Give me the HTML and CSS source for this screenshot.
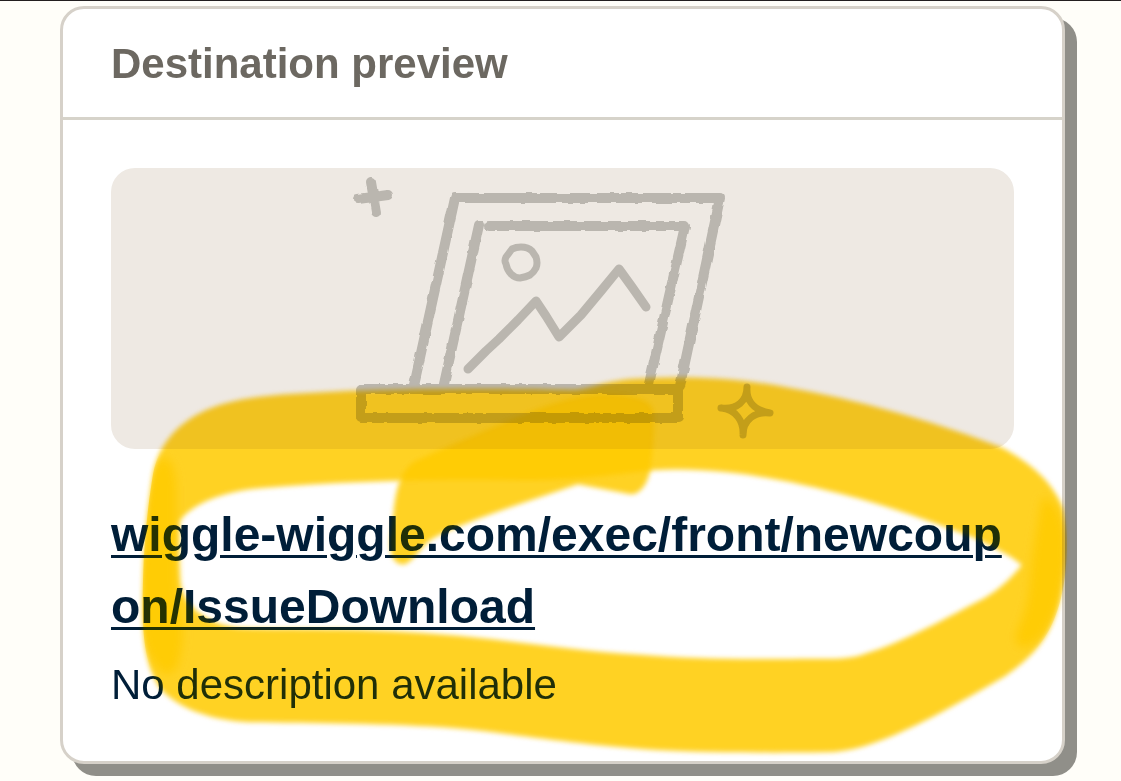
FILE: index.html
```
<!DOCTYPE html>
<html lang="en">
<head>
<meta charset="utf-8">
<meta name="viewport" content="width=device-width, initial-scale=1">
<title>Destination preview</title>
<link rel="stylesheet" href="styles.css">
</head>
<body>
<main class="page">
  <article class="card">
    <header class="card-header">
      <h1 class="card-title">Destination preview</h1>
    </header>
    <div class="card-body">
      <div class="thumb">
        <svg class="thumb-art" viewBox="343 168 440 281" aria-hidden="true">
          <defs>
            <filter id="rough" x="-5%" y="-5%" width="110%" height="110%">
              <feTurbulence type="fractalNoise" baseFrequency="0.12" numOctaves="1" seed="4" result="n"/>
              <feDisplacementMap in="SourceGraphic" in2="n" scale="4" xChannelSelector="R" yChannelSelector="G"/>
            </filter>
          </defs>
          <g class="sketch" filter="url(#rough)">
            <path class="thick" d="M414 385 L455 198 H720 L680 386"/>
            <path class="thick" d="M479 225 L444 384 M489 226 H685 L649 384"/>
            <path class="thick" d="M361 389 H678 V418 H361 Z"/>
            <path class="thick" d="M371 182 L376 212 M358 199 L388 195"/>
          </g>
          <g class="sketch">
            <path class="medium" d="M468 369 L486 351 L499 339 L518 320 L536 301 L546 316 L559 337 L569 327 L581 315 L601 291 L619 269 L632 287 L646 307"/>
            <path class="thin" d="M512 249 Q516 247 521 247 Q528 247 532 251 Q534 254 536 257 Q538 263 536 268 Q534 272 530 275 Q526 277 520 278 Q515 278 511 274 Q507 270 506 264 Q504 261 506 257 Z"/>
            <path class="thin" d="M747 387 C746 400 753 410 770 413 C755 411 743 420 743 435 C744 422 736 409 721 408 C737 410 747 401 747 387 Z"/>
          </g>
        </svg>
      </div>
      <div class="details">
        <a class="destination" href="#destination">wiggle-wiggle.com/exec/front/newcoupon/IssueDownload</a>
        <p class="description">No description available</p>
      </div>
    </div>
    <svg class="marker marker-ink" viewBox="60 6 1005 758" preserveAspectRatio="none" aria-hidden="true">
      <defs>
        <filter id="soft" x="-5%" y="-5%" width="110%" height="110%"><feGaussianBlur stdDeviation="2.5"/></filter>
        <filter id="softer" x="-50%" y="-20%" width="200%" height="140%"><feGaussianBlur stdDeviation="5"/></filter>
        <clipPath id="ring-outer"><path d="M143 580 C144 540 148 505 153 474 C160 440 183 417 220 405 H1065 V510 C1068 535 1068 570 1061 598 C1052 635 1035 655 1005 676 L905 730 H250 C205 720 175 705 160 688 C142 660 142 625 143 580 Z"/></clipPath>
        <g id="stroke">
          <path filter="url(#soft)" fill-rule="evenodd" d="M143 580 C144 540 148 505 153 474 C160 440 183 417 220 405 C257 394 300 394 350 391 C420 389 480 388 570 390 C592 390 597 382 635 379 C700 376 740 378 800 390 C870 403 940 424 1000 447 C1030 462 1055 484 1063 510 C1066 535 1065 570 1060 598 C1052 635 1035 655 1005 676 C970 696 940 714 905 730 C875 744 850 752 825 752 C760 753 700 752 660 750 C570 744 520 734 455 728 C390 723 310 723 250 722 C205 720 175 705 160 688 C142 660 142 625 143 580 Z M179 521 C190 507 215 492 260 488 C340 481 430 479 510 480 C560 482 620 474 653 470 C720 466 790 480 850 496 C900 509 940 525 975 538 C998 549 1010 555 1022 565 C1015 574 1002 588 985 598 C950 616 905 642 865 654 C850 660 830 659 800 659 C740 660 690 659 640 655 C560 650 500 638 420 633 C350 628 290 630 240 628 C205 625 185 605 180 585 C178 565 178 540 179 521 Z"/>
          <path filter="url(#soft)" d="M600 394 C570 397 545 405 518 417 C480 432 440 450 414 462 C396 475 395 500 392 530 C388 553 393 566 405 564 C415 559 419 549 430 540 C450 528 480 518 510 507 L578 484 L630 494 C640 495 648 483 650 470 C654 445 655 420 653 410 C650 398 628 394 600 394 Z"/>
          <g clip-path="url(#ring-outer)">
            <path filter="url(#softer)" d="M150 480 C160 445 174 455 176 485 V585 C180 610 186 630 180 655 C176 680 161 680 150 655 C136 635 140 575 146 500 Z"/>
            <path filter="url(#softer)" d="M1042 498 C1058 500 1068 525 1066 560 C1062 600 1050 635 1030 645 C1012 652 1014 635 1022 620 C1032 595 1030 568 1035 540 Z"/>
          </g>
        </g>
      </defs>
      <use href="#stroke"/>
    </svg>
    <svg class="marker marker-veil" viewBox="60 6 1005 758" preserveAspectRatio="none" aria-hidden="true"><use href="#stroke"/></svg>
  </article>
</main>
</body>
</html>
```
FILE: styles.css
```
* {
  box-sizing: border-box;
}

body {
  margin: 0;
  background: #fffef9;
  color: #001e38;
  font-family: "Liberation Sans", Arial, sans-serif;
}

.page {
  border-top: 1px solid #231f20;
  padding: 5px 56px 17px 60px;
}

.card {
  position: relative;
  border: 3px solid #d6d1c9;
  border-radius: 24px;
  background: #fff;
  box-shadow: 12px 12px 0 #908f89;
}

.card-header {
  padding: 25px 48px 23px;
  border-bottom: 3px solid #d6d3ca;
}

.card-title {
  margin: 0;
  color: #6c6861;
  font-size: 42px;
  line-height: 60px;
}

.card-body {
  display: flex;
  flex-direction: column;
  gap: 50px;
  padding: 48px 48px 46px;
}

.thumb {
  display: flex;
  justify-content: center;
  border-radius: 24px;
  background: #eee9e3;
}

.thumb-art {
  display: block;
  width: 440px;
  max-width: 100%;
}

.sketch {
  fill: none;
  stroke: #bab6af;
  stroke-linecap: round;
  stroke-linejoin: round;
}

.thick {
  stroke-width: 10px;
}

.medium {
  stroke-width: 9px;
}

.thin {
  stroke-width: 7px;
}

.details {
  display: flex;
  flex-direction: column;
  gap: 12px;
}

.destination {
  color: inherit;
  font-size: 48px;
  font-weight: bold;
  line-height: 72px;
  text-decoration-thickness: 3px;
  text-underline-offset: 4px;
  word-break: break-all;
}

.description {
  margin: 0;
  font-size: 42px;
  line-height: 60px;
}

/* Highlighter ring drawn over the card */
.marker {
  position: absolute;
  top: -3px;
  left: -3px;
  width: calc(100% + 6px);
  height: calc(100% + 6px);
  overflow: visible;
  pointer-events: none;
  fill: #ffcb00;
  fill-opacity: 0.84;
}

.marker-ink {
  mix-blend-mode: multiply;
}

.marker-veil {
  opacity: 0.15;
}
```
